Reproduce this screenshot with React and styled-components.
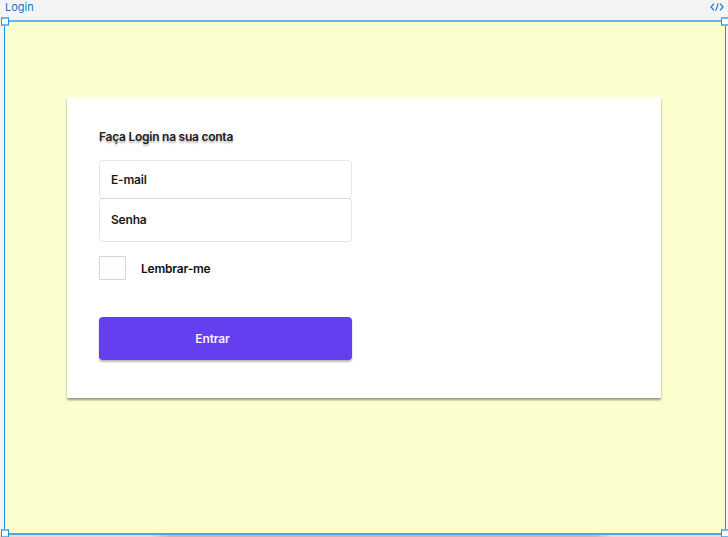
import React from 'react';
import styled, { createGlobalStyle } from 'styled-components';

const GlobalStyle = createGlobalStyle`
  * { box-sizing: border-box; }
  body { margin: 0; background: #f4f4f4; overflow: hidden; font-family: Inter, sans-serif; }
`;

const Canvas = styled.div`
  display: flex;
  flex-direction: column;
  width: 728px;
  height: 537px;
  overflow: hidden;
`;

const FrameHeader = styled.header`
  display: flex;
  flex: none;
  justify-content: space-between;
  height: 20px;
  padding: 0 4px 0 5px;
  color: #1777c9;
  font-size: 11px;
  line-height: 15px;
`;

const CodeIcon = styled.svg`
  display: block;
  width: 14px;
  height: 10px;
  margin-top: 2px;
`;

const Frame = styled.main`
  position: relative;
  flex: none;
  width: 722px;
  height: 515px;
  margin-left: 4px;
  padding: 75px 0 0 62px;
  background: #fcfecd;
  border: 1px solid #1c8fe1;
  border-top: 2px solid #62b7ea;
  border-bottom: 2px solid #4fa7dd;
`;

const Handle = styled.span`
  position: absolute;
  width: 8px;
  height: 9px;
  background: #fff;
  border: 1px solid #1c8fe1;
  border-top: 2px solid #6bbaee;
  border-bottom: 2px solid #6bbaee;
  ${({ $v }) => ($v === 'top' ? 'top: -5px;' : 'bottom: -5px;')}
  ${({ $h }) => ($h === 'left' ? 'left: -4px;' : 'right: -4px;')}
`;

const Card = styled.form`
  display: flex;
  flex-direction: column;
  align-items: flex-start;
  width: 594px;
  height: 301px;
  padding: 31px 32px 0;
  background: #fff;
  box-shadow: 0 1.5px 2px rgba(0, 0, 0, 0.4);
`;

const Title = styled.h1`
  margin: 0 0 15px;
  color: #222;
  font-size: 12px;
  font-weight: 600;
  line-height: 17px;
  letter-spacing: -0.25px;
  white-space: nowrap;
  text-shadow: 0 2px 2px rgba(0, 0, 0, 0.3);
`;

const Field = styled.div`
  display: flex;
  align-items: center;
  width: 253px;
  height: ${({ $height }) => $height}px;
  padding: 0 0 1px 11px;
  border: 1px solid #e6e6e6;
  border-radius: 4px;
  color: #1b1b1b;
  font-size: 12px;
  font-weight: 600;
  letter-spacing: -0.2px;

  & + & {
    margin-top: -1px;
    border-top-color: #d6d6d6;
  }
`;

const Remember = styled.label`
  display: flex;
  align-items: center;
  gap: 15px;
  margin-top: 14px;
  color: #111;
  font-size: 12px;
  font-weight: 600;
  letter-spacing: -0.2px;
`;

const CheckBox = styled.span`
  width: 27px;
  height: 24px;
  background: #fffdfd;
  border: 1px solid #d9d3d7;
  border-radius: 1px;
`;

const Submit = styled.button`
  width: 253px;
  height: 43px;
  margin-top: 37px;
  padding: 0 26px 0 0;
  border: 0;
  border-radius: 4px;
  background: #653ef0;
  box-shadow: 0 2px 2px rgba(0, 0, 0, 0.28);
  color: #f4f0ff;
  font: 600 12px/43px Inter, sans-serif;
  letter-spacing: -0.1px;
`;

const BottomShade = styled.div`
  flex: none;
  height: 2px;
  background: linear-gradient(90deg, #dedede 150px, #bcbcbc 170px, #bcbcbc 595px, #dedede 612px);
`;

const fields = [
  { label: 'E-mail', height: 39 },
  { label: 'Senha', height: 44 },
];

export default function App() {
  return (
    <Canvas>
      <GlobalStyle />
      <FrameHeader>
        <span>Login</span>
        <CodeIcon viewBox="0 0 14 10" fill="none" stroke="currentColor" strokeWidth="1.2">
          <path d="M4 1.7 1 5l3 3.3M10 1.7 13 5l-3 3.3M8.2 1.4 5.8 8.6" />
        </CodeIcon>
      </FrameHeader>
      <Frame>
        <Card>
          <Title>Faça Login na sua conta</Title>
          {fields.map(({ label, height }) => (
            <Field key={label} $height={height}>{label}</Field>
          ))}
          <Remember>
            <CheckBox />
            Lembrar-me
          </Remember>
          <Submit type="button">Entrar</Submit>
        </Card>
        <Handle $v="top" $h="left" />
        <Handle $v="top" $h="right" />
        <Handle $v="bottom" $h="left" />
        <Handle $v="bottom" $h="right" />
      </Frame>
      <BottomShade />
    </Canvas>
  );
}
